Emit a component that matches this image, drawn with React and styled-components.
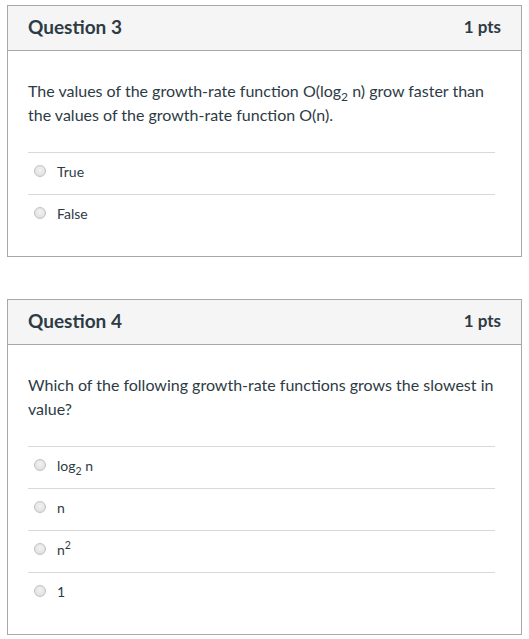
import React from "react";
import styled, { createGlobalStyle } from "styled-components";

const Global = createGlobalStyle`
  html, body { margin: 0; padding: 0; background: #fff; }
  body { font-family: Lato, "Open Sans", "Liberation Sans", sans-serif; color: #2d3b45; }
`;

const Page = styled.div`
  padding: 5px 7px;
  width: 515px;
  display: flex;
  flex-direction: column;
  gap: 42px;
`;

const Card = styled.section`
  border: 1px solid #a8a8a8;
  background: #fff;
`;

const Header = styled.header`
  height: 45px;
  box-sizing: border-box;
  background: #f5f5f5;
  border-bottom: 1px solid #a8a8a8;
  display: flex;
  align-items: center;
  justify-content: space-between;
  padding: 0 20px 3px 20px;
`;

const Title = styled.h2`
  margin: 0;
  font-size: 19px;
  font-weight: 700;
  color: #2d3b45;
`;

const Points = styled.span`
  font-size: 17px;
  font-weight: 700;
  color: #2d3b45;
`;

const Body = styled.div`
  padding: 28px 26px 20px 20px;
`;

const Prompt = styled.p`
  margin: 0 0 25px;
  font-size: 16px;
  line-height: 24px;
  color: #2d3b45;
`;

const Options = styled.div`
  display: flex;
  flex-direction: column;
`;

const Option = styled.label`
  height: 42px;
  box-sizing: border-box;
  border-top: 1px solid #d9d9d9;
  display: flex;
  align-items: center;
  gap: 11px;
  padding: 0 0 5px 6px;
  font-size: 14px;
  color: #2d3b45;
`;

const Radio = styled.span`
  width: 10px;
  height: 10px;
  border-radius: 50%;
  border: 1px solid #c2c2c2;
  background: radial-gradient(circle at 50% 40%, #f2f2f2 0%, #e2e2e2 70%, #d6d6d6 100%);
  flex: none;
`;

const Sub = styled.sub`
  font-size: 0.75em;
  line-height: 0;
`;

const Sup = styled.sup`
  font-size: 0.75em;
  line-height: 0;
`;

const questions = [
  {
    title: "Question 3",
    pts: "1 pts",
    prompt: (
      <>
        The values of the growth-rate function O(log<Sub>2</Sub> n) grow faster than the values of the growth-rate function O(n).
      </>
    ),
    options: ["True", "False"],
  },
  {
    title: "Question 4",
    pts: "1 pts",
    prompt: <>Which of the following growth-rate functions grows the slowest in value?</>,
    options: [
      <>log<Sub>2</Sub> n</>,
      <>n</>,
      <>n<Sup>2</Sup></>,
      <>1</>,
    ],
  },
];

export default function App() {
  return (
    <>
      <Global />
      <Page>
        {questions.map((q) => (
          <Card key={q.title}>
            <Header>
              <Title>{q.title}</Title>
              <Points>{q.pts}</Points>
            </Header>
            <Body>
              <Prompt>{q.prompt}</Prompt>
              <Options>
                {q.options.map((o, i) => (
                  <Option key={i}>
                    <Radio />
                    <span>{o}</span>
                  </Option>
                ))}
              </Options>
            </Body>
          </Card>
        ))}
      </Page>
    </>
  );
}
